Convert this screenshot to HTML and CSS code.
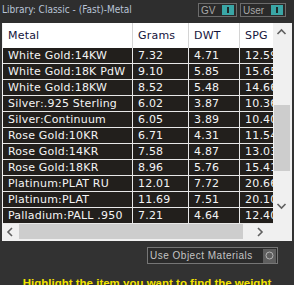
FILE: index.html
```html
<!DOCTYPE html>
<html>
<head>
<meta charset="utf-8">
<link rel="stylesheet" href="styles.css">
</head>
<body>
<div class="top">
  <div class="title">Library: Classic - (Fast)-Metal</div>
  <div class="toggles">
    <div class="toggle toggle-gv"><span>GV</span><i class="knob"></i></div>
    <div class="toggle toggle-user"><span>User</span><i class="knob"></i></div>
  </div>
</div>
<div class="panel">
  <div class="main">
    <div class="table">
      <div class="row head">
        <div class="cell">Metal</div><div class="cell">Grams</div><div class="cell">DWT</div><div class="cell">SPG</div>
      </div>
      <div class="row"><div class="cell">White Gold:14KW</div><div class="cell">7.32</div><div class="cell">4.71</div><div class="cell">12.59</div></div>
      <div class="row"><div class="cell">White Gold:18K PdW</div><div class="cell">9.10</div><div class="cell">5.85</div><div class="cell">15.65</div></div>
      <div class="row"><div class="cell">White Gold:18KW</div><div class="cell">8.52</div><div class="cell">5.48</div><div class="cell">14.66</div></div>
      <div class="row"><div class="cell">Silver:.925 Sterling</div><div class="cell">6.02</div><div class="cell">3.87</div><div class="cell">10.36</div></div>
      <div class="row"><div class="cell">Silver:Continuum</div><div class="cell">6.05</div><div class="cell">3.89</div><div class="cell">10.40</div></div>
      <div class="row"><div class="cell">Rose Gold:10KR</div><div class="cell">6.71</div><div class="cell">4.31</div><div class="cell">11.54</div></div>
      <div class="row"><div class="cell">Rose Gold:14KR</div><div class="cell">7.58</div><div class="cell">4.87</div><div class="cell">13.03</div></div>
      <div class="row"><div class="cell">Rose Gold:18KR</div><div class="cell">8.96</div><div class="cell">5.76</div><div class="cell">15.41</div></div>
      <div class="row"><div class="cell">Platinum:PLAT RU</div><div class="cell">12.01</div><div class="cell">7.72</div><div class="cell">20.66</div></div>
      <div class="row"><div class="cell">Platinum:PLAT</div><div class="cell">11.69</div><div class="cell">7.51</div><div class="cell">20.10</div></div>
      <div class="row"><div class="cell">Palladium:PALL .950</div><div class="cell">7.21</div><div class="cell">4.64</div><div class="cell">12.40</div></div>
    </div>
    <div class="vscroll">
      <svg class="arrow-up" width="17" height="14" viewBox="0 0 17 14"><path d="M4.5 9 L8.5 5 L12.5 9" fill="none" stroke="#606060" stroke-width="1.6"/></svg>
      <div class="vtrack"><div class="vthumb"></div></div>
      <svg class="arrow-down" width="17" height="14" viewBox="0 0 17 14"><path d="M4.5 5 L8.5 9 L12.5 5" fill="none" stroke="#606060" stroke-width="1.6"/></svg>
    </div>
  </div>
  <div class="hscroll">
    <svg width="14" height="16" viewBox="0 0 14 16"><path d="M9 4 L5 8 L9 12" fill="none" stroke="#606060" stroke-width="1.6"/></svg>
    <div class="htrack"><div class="hthumb"></div></div>
    <svg width="14" height="16" viewBox="0 0 14 16"><path d="M5 4 L9 8 L5 12" fill="none" stroke="#606060" stroke-width="1.6"/></svg>
    <div class="corner"></div>
  </div>
</div>
<div class="options">
  <div class="check">
    <span>Use Object Materials</span>
    <i class="radio"><svg width="13" height="13" viewBox="0 0 13 13"><circle cx="6.5" cy="6.5" r="3.5" fill="none" stroke="#b4b4b4" stroke-width="1"/></svg></i>
  </div>
</div>
<div class="hint">Highlight the item you want to find the weight</div>
</body>
</html>
```
FILE: styles.css
```css
html, body {
  margin: 0;
  padding: 0;
  background: #323232;
  width: 294px;
  height: 285px;
  overflow: hidden;
}
body {
  font-family: "DejaVu Sans", Verdana, sans-serif;
}
.top {
  height: 23px;
  display: flex;
  justify-content: space-between;
  align-items: flex-start;
  background: #2e2e2e;
}
.title {
  font-family: Tahoma, "DejaVu Sans Condensed", "Liberation Sans", sans-serif;
  font-size: 10px;
  color: #b9c4d6;
  padding: 4px 0 0 2px;
  line-height: 11px;
}
.toggles {
  display: flex;
  gap: 3px;
  padding: 3px 8px 0 0;
}
.toggle {
  height: 12px;
  border: 1px solid #6c6c6c;
  background: #2a2a2a;
  display: flex;
  align-items: center;
  justify-content: space-between;
  padding: 0 2px 0 2px;
  gap: 4px;
  font-family: "Liberation Sans", Arial, sans-serif;
  font-size: 10px;
  color: #a8a8a8;
}
.toggle-gv { width: 33px; }
.toggle-user { width: 40px; }
.knob {
  width: 12px;
  height: 10px;
  background: #3aa6a6;
  position: relative;
  display: block;
}
.knob::after {
  content: "";
  position: absolute;
  left: 5px;
  top: 2px;
  width: 2px;
  height: 6px;
  background: #1e2a2a;
}
.panel {
  margin-left: 2px;
  width: 289px;
  border-left: 1px solid #f2f2f2;
  border-bottom: 1px solid #f2f2f2;
  background: #f0f0f0;
}
.main {
  display: flex;
}
.table {
  width: 270px;
  background: #221f1c;
}
.row {
  display: grid;
  grid-template-columns: 129px 55px 50px 33px;
  column-gap: 1px;
  background: #e8e8e8;
  height: 16px;
}
.row .cell {
  background: #221f1c;
  color: #f4f4f4;
  font-size: 11px;
  line-height: 15px;
  height: 15px;
  padding-left: 5px;
  white-space: nowrap;
  overflow: hidden;
  letter-spacing: 0.2px;
}
.row.head {
  height: 25px;
  background: #d4d4d4;
}
.row.head .cell {
  background: #ffffff;
  color: #14143c;
  height: 25px;
  line-height: 26px;
}
.vscroll {
  width: 17px;
  height: 200px;
  background: #f0f0f0;
  display: flex;
  flex-direction: column;
}
.arrow-up { display: block; margin-top: 2px; }
.arrow-down { display: block; margin-bottom: 10px; }
.vtrack {
  flex: 1;
  position: relative;
}
.vthumb {
  position: absolute;
  left: 1px;
  right: 0;
  top: 66px;
  height: 66px;
  background: #cdcdcd;
}
.hscroll {
  height: 16px;
  display: flex;
  align-items: center;
  background: #f0f0f0;
}
.hscroll svg { display: block; flex: none; }
.htrack {
  width: 236px;
  height: 16px;
  position: relative;
}
.hthumb {
  position: absolute;
  left: 2px;
  width: 224px;
  top: 0;
  bottom: 1px;
  background: #cdcdcd;
}
.corner { flex: 1; }
.options {
  display: flex;
  justify-content: flex-end;
  padding: 6px 16px 0 0;
}
.check {
  width: 127px;
  height: 15px;
  border: 1px solid #767676;
  background: #2b2b2b;
  display: flex;
  align-items: center;
  justify-content: space-between;
  font-family: "Liberation Sans", Arial, sans-serif;
  font-size: 10px;
  color: #c4c4c4;
  padding-left: 2px;
}
.check span { letter-spacing: 0.5px; }
.radio {
  width: 13px;
  height: 14px;
  background: #5e5e5e;
  display: flex;
  align-items: center;
  justify-content: center;
  margin-right: 1px;
}
.radio svg { display: block; }
.hint {
  text-align: center;
  font-family: "Liberation Sans", Arial, sans-serif;
  font-weight: bold;
  font-size: 11.5px;
  color: #f2e300;
  padding-top: 13px;
  white-space: nowrap;
}
```
